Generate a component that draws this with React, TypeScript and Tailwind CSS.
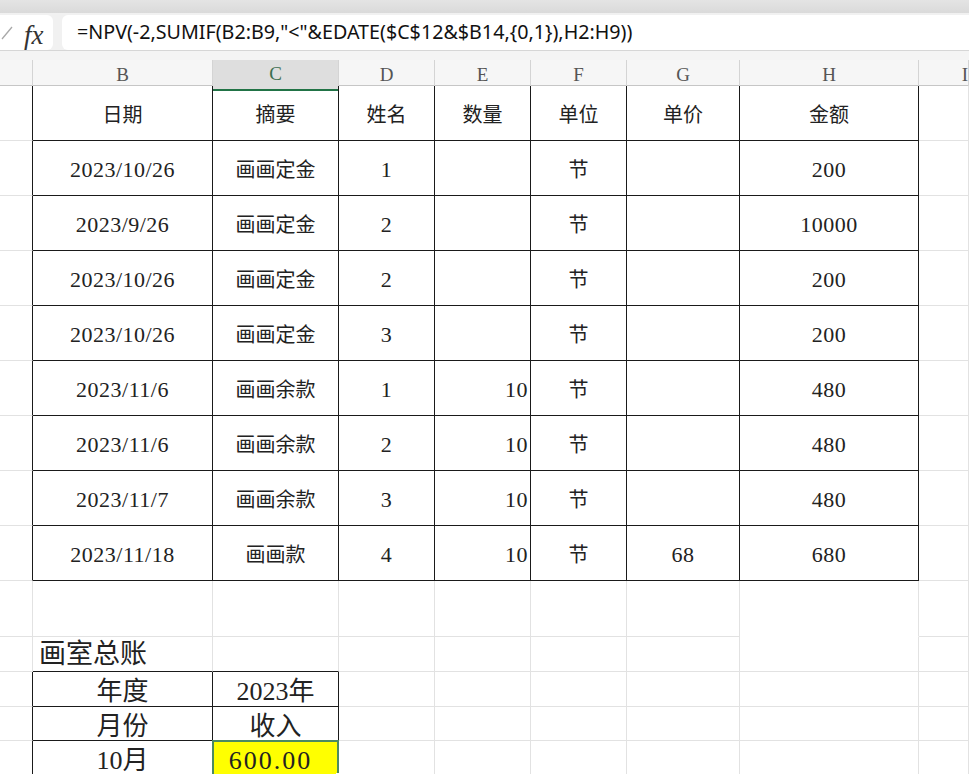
import React from 'react';

const cols = ['', 'B', 'C', 'D', 'E', 'F', 'G', 'H', 'I'];
const rowHeights = [55, 55, 55, 55, 55, 55, 55, 55, 55, 56, 35, 35, 34, 35];

const header = ['日期', '摘要', '姓名', '数量', '单位', '单价', '金额'];
const data = [
  ['2023/10/26', '画画定金', '1', '', '节', '', '200'],
  ['2023/9/26', '画画定金', '2', '', '节', '', '10000'],
  ['2023/10/26', '画画定金', '2', '', '节', '', '200'],
  ['2023/10/26', '画画定金', '3', '', '节', '', '200'],
  ['2023/11/6', '画画余款', '1', '10', '节', '', '480'],
  ['2023/11/6', '画画余款', '2', '10', '节', '', '480'],
  ['2023/11/7', '画画余款', '3', '10', '节', '', '480'],
  ['2023/11/18', '画画款', '4', '10', '节', '68', '680'],
];

const summary: Record<number, [string, string]> = {
  11: ['年度', '2023年'],
  12: ['月份', '收入'],
  13: ['10月', '600.00'],
};

// r: 0-based sheet row under the column header (0 = 日期 row)
const inMain = (r: number, c: number) => r >= 0 && r <= 8 && c >= 1 && c <= 7;
const inSum = (r: number, c: number) => r >= 11 && r <= 13 && c >= 1 && c <= 2;
const boxed = (r: number, c: number) => inMain(r, c) || inSum(r, c);

function cellText(r: number, c: number): string {
  if (c === 0 || c === 8) return '';
  if (r === 0) return header[c - 1];
  if (r >= 1 && r <= 8) return data[r - 1][c - 1];
  if (summary[r] && c <= 2) return summary[r][c - 1];
  return '';
}

function Cell({ r, c }: { r: number; c: number }) {
  const rightBlack = boxed(r, c) || boxed(r, c + 1);
  const bottomBlack = boxed(r, c) || boxed(r + 1, c);
  const noBottom = r === 9 && c === 7;
  const text = cellText(r, c);
  const big = r >= 11;
  const isNum = /^[0-9./]+$/.test(text);
  const alignRight = r >= 1 && r <= 8 && c === 4;
  const selected = r === 13 && c === 2;

  return (
    <div
      className={`relative flex items-center overflow-visible border-r border-b ${
        rightBlack ? 'border-r-[#1a1a1a]' : 'border-r-[#e2e2e2]'
      } ${bottomBlack ? 'border-b-[#1a1a1a]' : noBottom ? 'border-b-transparent' : 'border-b-[#e2e2e2]'} ${
        alignRight ? 'justify-end pr-[2px]' : 'justify-center'
      } ${selected ? 'bg-[#ffff00] tracking-[2px] pr-[10px]' : ''} ${
        big ? 'text-[26px] leading-none pt-[6px]' : isNum ? 'text-[22px] tracking-[0.5px] pt-[3px]' : 'text-[20px] pt-[4px]'
      } text-[#222]`}
    >
      {r === 10 && c === 1 && (
        <span className="absolute left-[6px] bottom-[3px] whitespace-nowrap text-[27px] leading-none">画室总账</span>
      )}
      {text}
      {selected && (
        <>
          <div className="absolute -left-px -top-px right-[-1px] bottom-[-1px] border-2 border-[#4b8a62]" />
          <div className="absolute right-[-4px] bottom-[-4px] w-[6px] h-[6px] bg-[#217346] border border-white" />
        </>
      )}
    </div>
  );
}

export default function App() {
  return (
    <div className="w-[969px] h-[774px] overflow-hidden bg-white font-['Liberation_Serif','Noto_Sans_CJK_SC',serif]">
      {/* toolbar edge */}
      <div className="h-[13px] bg-gradient-to-b from-[#e4e4e4] to-[#dadada]" />

      {/* formula bar */}
      <div className="h-[37px] bg-[#f1f1f1] flex items-center gap-[9px] pt-px">
        <div className="w-[53px] h-[35px] bg-white rounded-r-md flex items-center relative">
          <svg width="12" height="14" viewBox="0 0 12 14" className="absolute left-[1px] top-[11px]">
            <path d="M1 13 L11 1" stroke="#a8a8a8" strokeWidth="1.3" fill="none" />
          </svg>
          <span className="absolute left-[24px] top-[0px] italic text-[27px] text-[#333] font-['Liberation_Serif',serif]">fx</span>
        </div>
        <div className="flex-1 h-[35px] bg-white rounded-l-md flex items-center pl-[15px] font-['Noto_Sans','Noto_Sans_CJK_SC',sans-serif] text-[19.7px] text-[#111]">
          =NPV(-2,SUMIF(B2:B9,"&lt;"&amp;EDATE($C$12&amp;$B14,{'{'}0,1{'}'}),H2:H9))
        </div>
      </div>

      <div className="h-[10px] bg-[#f4f4f4] border-t border-[#d6d6d6]" />

      {/* column headers */}
      <div className="grid grid-cols-[33px_180px_126px_96px_96px_96px_113px_179px_50px] h-[26px] bg-[#f6f6f6] border-b border-[#c6c6c6]">
        {cols.map((name, i) => (
          <div
            key={i}
            className={`flex items-center justify-center text-[19px] border-r border-[#d4d4d4] ${
              name === 'C' ? 'bg-[#dedede] text-[#3c6e50] border-b-2 border-b-[#217346]' : 'text-[#555]'
            } ${name === 'I' ? 'justify-end' : ''}`}
          >
            {name}
          </div>
        ))}
      </div>

      {/* sheet body */}
      <div className="grid grid-cols-[33px_180px_126px_96px_96px_96px_113px_179px_50px]">
        {rowHeights.map((h, r) => (
          <React.Fragment key={r}>
            {cols.map((_, c) => (
              <div key={c} className="grid" style={{ height: h }}>
                <Cell r={r} c={c} />
              </div>
            ))}
          </React.Fragment>
        ))}
      </div>
    </div>
  );
}
